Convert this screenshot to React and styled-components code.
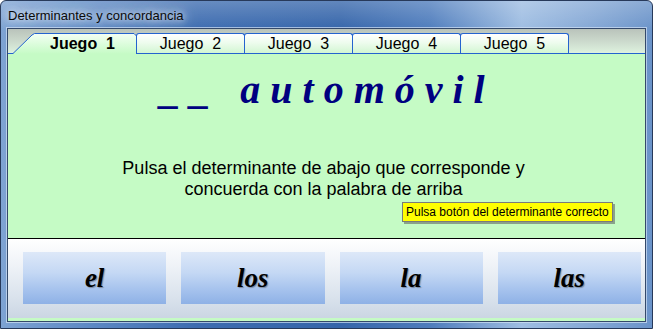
import React from 'react';
import styled, { createGlobalStyle } from 'styled-components';

const Global = createGlobalStyle`
    html, body { margin: 0; padding: 0; background: #fff; }
    * { box-sizing: border-box; }
`

const Window = styled.div`
    width: 653px;
    height: 329px;
    border: 1px solid #27395a;
    border-radius: 6px 6px 0 0;
    padding: 0 6px 6px 6px;
    display: flex;
    flex-direction: column;
    background:
        linear-gradient(180deg, rgba(255,255,255,0.22) 0%, rgba(255,255,255,0) 9%),
        linear-gradient(90deg, #7ea3d3 0%, #5c88c4 14%, #3d6cb0 30%, #3565aa 52%, #4f7dbd 66%, #9ebde2 80%, #86a9d6 90%, #6a93c9 100%);
`

const TitleBar = styled.div`
    height: 27px;
    display: flex;
    align-items: center;
    padding: 2px 0 0 1px;
    font-family: "Liberation Sans", Arial, sans-serif;
    font-size: 13px;
    color: #0a0a0a;
    span {
        text-shadow: 0 0 6px rgba(235,242,252,0.95), 0 0 12px rgba(235,242,252,0.9), 0 0 18px rgba(235,242,252,0.8);
    }
`

const Client = styled.div`
    flex: 1;
    display: flex;
    flex-direction: column;
    border: 1px solid #34496a;
    box-shadow: 0 0 0 1px rgba(210,225,245,0.7);
    background: #c5fbc5;
    padding-bottom: 3px;
`

const TabStrip = styled.div`
    height: 24px;
    display: flex;
    align-items: flex-end;
    background: linear-gradient(180deg, #b9c3bb 0%, #cbd9cc 50%, #def2de 100%);
    position: relative;
    z-index: 1;
`

const ActiveTab = styled.div`
    position: relative;
    width: 129px;
    height: 21px;
    margin-bottom: -1px;
    display: flex;
    align-items: center;
    justify-content: center;
    padding: 1px 0 0 20px;
    font-family: "Liberation Sans", Arial, sans-serif;
    font-size: 16px;
    font-weight: 700;
    white-space: pre;
    color: #000;
    svg { position: absolute; left: 0; top: 0; z-index: -1; }
`

const Tab = styled.div`
    width: 109px;
    height: 20px;
    margin-left: -1px;
    display: flex;
    align-items: center;
    justify-content: center;
    border: 1px solid #2463cf;
    border-bottom: none;
    border-radius: 3px 3px 0 0;
    background: linear-gradient(180deg, #ffffff 0%, #eefcee 45%, #d2f6d2 100%);
    font-family: "Liberation Sans", Arial, sans-serif;
    font-size: 16px;
    white-space: pre;
    color: #000;
    padding-top: 1px;
`

const Panel = styled.div`
    position: relative;
    height: 186px;
    border-top: 1px solid #2463cf;
    border-bottom: 1px solid #000;
    display: flex;
    flex-direction: column;
    align-items: center;
`

const Word = styled.div`
    margin-top: 14px;
    height: 44px;
    line-height: 44px;
    padding-right: 8px;
    font-family: "Liberation Serif", "Times New Roman", serif;
    font-size: 40px;
    font-weight: 700;
    font-style: italic;
    color: #000080;
    white-space: pre;
`

const Hint = styled.p`
    margin: 46px 0 0 0;
    padding-right: 6px;
    text-align: center;
    font-family: "Liberation Sans", Arial, sans-serif;
    font-size: 18px;
    line-height: 21px;
    color: #000;
`

const Tooltip = styled.div`
    position: absolute;
    left: 394px;
    top: 148px;
    height: 20px;
    padding: 0 3px;
    display: flex;
    align-items: center;
    background: #ffff00;
    border: 1px solid #7a7a7a;
    box-shadow: 2px 2px 0 rgba(90,90,90,0.55);
    font-family: "Liberation Sans", Arial, sans-serif;
    font-size: 12px;
    color: #000;
    white-space: nowrap;
`

const ButtonBar = styled.div`
    height: 79px;
    display: grid;
    grid-template-columns: repeat(4, 1fr);
    gap: 15px;
    padding: 13px 4px 14px 15px;
    background: linear-gradient(180deg, #ffffff 0%, #eef2f7 35%, #d9e2ec 75%, #cbd6e3 100%);
`

const Choice = styled.button`
    border: none;
    margin: 0;
    padding: 0;
    background: linear-gradient(180deg, #dde8f8 0%, #c4d8f4 40%, #a8c4ee 70%, #8eb1e6 100%);
    font-family: "Liberation Serif", "Times New Roman", serif;
    font-size: 27px;
    font-weight: 700;
    font-style: italic;
    color: #000;
    text-shadow: 1px 1px 1px rgba(60,60,60,0.45);
    cursor: pointer;
`

const App = () => {
    const TABS = ['Juego  2', 'Juego  3', 'Juego  4', 'Juego  5'];
    const WORDS = ['el', 'los', 'la', 'las'];

    return (
        <>
            <Global />
            <Window>
                <TitleBar><span>Determinantes y concordancia</span></TitleBar>
                <Client>
                    <TabStrip>
                        <ActiveTab>
                            <svg width="129" height="21" viewBox="0 0 129 21">
                                <defs>
                                    <linearGradient id="act" x1="0" y1="0" x2="0" y2="1">
                                        <stop offset="0" stopColor="#f4fff4" />
                                        <stop offset="1" stopColor="#c5fbc5" />
                                    </linearGradient>
                                </defs>
                                <path d="M0 21 L0 20.5 L5 20.5 L24 2 L26.5 0.5 L126 0.5 L128.5 3 L128.5 21 Z" fill="url(#act)" />
                                <path d="M0 20.5 L5 20.5 L24 2 L26.5 0.5 L126 0.5 L128.5 3 L128.5 21" fill="none" stroke="#2463cf" strokeWidth="1" />
                            </svg>
                            Juego  1
                        </ActiveTab>
                        {TABS.map((t, idx) => <Tab key={idx}>{t}</Tab>)}
                    </TabStrip>
                    <Panel>
                        <Word>_ _   a u t o m ó v i l</Word>
                        <Hint>
                            Pulsa el determinante de abajo que corresponde y<br />
                            concuerda con la palabra de arriba
                        </Hint>
                        <Tooltip>Pulsa botón del determinante correcto</Tooltip>
                    </Panel>
                    <ButtonBar>
                        {WORDS.map((w, idx) => <Choice key={idx}>{w}</Choice>)}
                    </ButtonBar>
                </Client>
            </Window>
        </>
    )
}

export default App
